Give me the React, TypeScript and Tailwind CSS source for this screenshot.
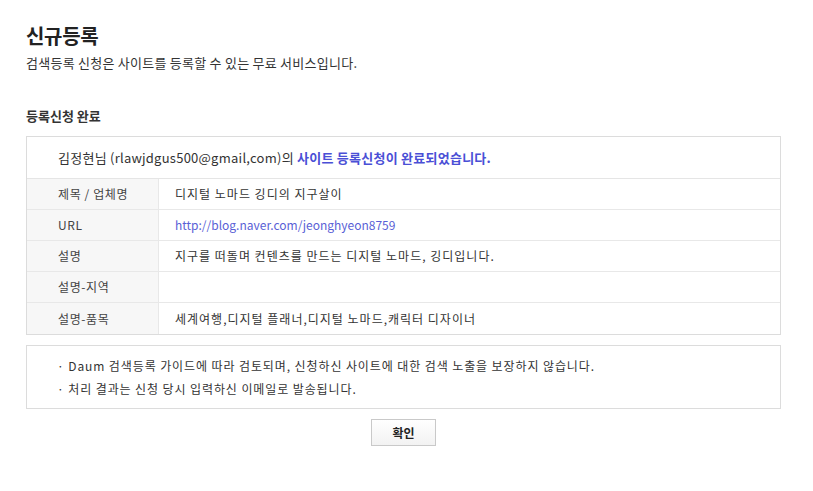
const rows: { label: string; value: string; link?: boolean }[] = [
  { label: "제목 / 업체명", value: "디지털 노마드 깅디의 지구살이" },
  { label: "URL", value: "http://blog.naver.com/jeonghyeon8759", link: true },
  { label: "설명", value: "지구를 떠돌며 컨텐츠를 만드는 디지털 노마드, 깅디입니다." },
  { label: "설명-지역", value: "" },
  { label: "설명-품목", value: "세계여행,디지털 플래너,디지털 노마드,캐릭터 디자이너" },
];

export default function App() {
  return (
    <div
      className="min-h-[491px] bg-white pl-[26px] pt-[22px] text-[#333]"
      style={{ fontFamily: '"Noto Sans CJK KR", "Liberation Sans", sans-serif' }}
    >
      {/* Title */}
      <h1 className="h-[28px] text-[20px] font-bold leading-[28px] tracking-[-0.3px] text-[#222]">신규등록</h1>
      <p className="mt-[3px] text-[13px] leading-[20px] tracking-[0.25px] text-[#333]">
        검색등록 신청은 사이트를 등록할 수 있는 무료 서비스입니다.
      </p>

      {/* Section */}
      <h2 className="mt-[33px] text-[13px] font-bold leading-[20px] text-[#333]">등록신청 완료</h2>

      <div className="mt-[10px] w-[755px] border border-[#dcdcdc]">
        <div className="flex h-[42px] items-center border-b border-[#e5e5e5] pl-[31px] text-[13px] tracking-[0.25px]">
          <span>김정현님 (rlawjdgus500@gmail,com)의&nbsp;</span>
          <span className="font-bold text-[#4a4fd6]">사이트 등록신청이 완료되었습니다.</span>
        </div>
        {rows.map((r, i) => (
          <div
            key={r.label}
            className={`flex h-[31px] text-[12px] ${i < rows.length - 1 ? "border-b border-[#e8e8e8]" : ""}`}
          >
            <div className="flex w-[132px] items-center border-r border-[#e8e8e8] bg-[#f7f7f7] pl-[31px] tracking-[0.6px] text-[#444]">
              {r.label}
            </div>
            <div
              className={`flex items-center pl-[16px] ${r.link ? "text-[#5a5fd6]" : "tracking-[1px] text-[#333]"}`}
            >
              {r.value}
            </div>
          </div>
        ))}
      </div>

      {/* Notice */}
      <div className="mt-[10px] flex h-[64px] w-[755px] flex-col justify-center gap-[3px] border border-[#dcdcdc] pl-[30px] text-[12px] leading-[20px] tracking-[0.9px] text-[#333]">
        <p>· Daum 검색등록 가이드에 따라 검토되며, 신청하신 사이트에 대한 검색 노출을 보장하지 않습니다.</p>
        <p>· 처리 결과는 신청 당시 입력하신 이메일로 발송됩니다.</p>
      </div>

      <div className="mt-[10px] flex w-[755px] justify-center">
        <button className="h-[27px] w-[65px] border border-[#c9c9c9] bg-gradient-to-b from-white to-[#f2f2f2] text-[12px] font-bold text-[#222]">
          확인
        </button>
      </div>
    </div>
  );
}
